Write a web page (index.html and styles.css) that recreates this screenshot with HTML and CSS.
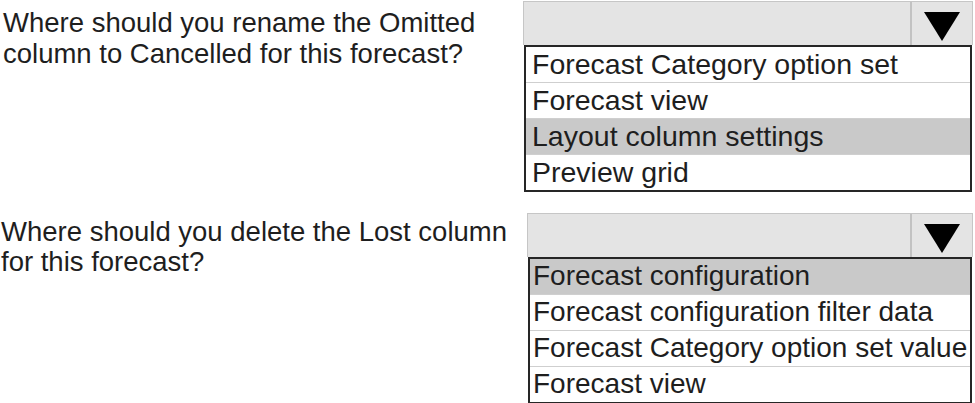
FILE: index.html
```html
<!DOCTYPE html>
<html>
<head>
<meta charset="utf-8">
<link rel="stylesheet" href="styles.css">
</head>
<body>
<div class="qa qa-first">
  <div class="question">Where should you rename the Omitted<br>column to Cancelled for this forecast?</div>
  <div class="select">
    <div class="select-head">
      <div class="select-value"></div>
      <div class="select-arrow"><svg width="36" height="30" viewBox="0 0 36 30"><polygon points="0,1 36,1 18,30" fill="#000"/></svg></div>
    </div>
    <ul class="options">
      <li>Forecast Category option set</li>
      <li>Forecast view</li>
      <li class="selected">Layout column settings</li>
      <li>Preview grid</li>
    </ul>
  </div>
</div>
<div class="qa qa-second">
  <div class="question">Where should you delete the Lost column<br>for this forecast?</div>
  <div class="select">
    <div class="select-head">
      <div class="select-value"></div>
      <div class="select-arrow"><svg width="36" height="30" viewBox="0 0 36 30"><polygon points="0,1 36,1 18,30" fill="#000"/></svg></div>
    </div>
    <ul class="options">
      <li class="selected">Forecast configuration</li>
      <li>Forecast configuration filter data</li>
      <li>Forecast Category option set value</li>
      <li>Forecast view</li>
    </ul>
  </div>
</div>
</body>
</html>
```
FILE: styles.css
```css
html, body {
  margin: 0;
  padding: 0;
  background: #fff;
}
body {
  font-family: "Liberation Sans", Arial, sans-serif;
  color: #1e1e1e;
  width: 975px;
  height: 403px;
  overflow: hidden;
}
.qa {
  display: flex;
  align-items: flex-start;
}
.qa-first {
  padding-top: 1px;
}
.qa-second {
  margin-top: 21px;
}
.question {
  flex: none;
  width: 520px;
  padding-left: 3px;
  padding-top: 6px;
  font-size: 27.5px;
  line-height: 31px;
}
.qa-second .question {
  padding-top: 4px;
  line-height: 30px;
  padding-left: 1px;
}
.select {
  flex: none;
  width: 450px;
}
.qa-second .select {
  margin-left: 6px;
  width: 446px;
}
.select-head {
  display: flex;
  height: 44px;
  box-sizing: border-box;
  border: 1px solid #c6c6c6;
  border-bottom: none;
  background: #e4e4e4;
}
.select-value {
  flex: 1;
  border-right: 2px solid #c2c2c2;
}
.select-arrow {
  width: 60px;
  display: flex;
  align-items: center;
  justify-content: center;
  padding-top: 5px;
}
.options {
  list-style: none;
  margin: 0 1px 0 1px;
  padding: 0;
  border: 2px solid #262626;
  background: #fff;
}
.options li {
  font-size: 28.5px;
  height: 35px;
  line-height: 34px;
  padding-left: 6px;
  border-top: 1px solid #cfcfcf;
  white-space: nowrap;
}
.qa-second .options li {
  font-size: 28px;
  padding-left: 3px;
}
.options li:first-child {
  border-top: none;
}
.options li.selected {
  background: #c9c9c9;
}
```
